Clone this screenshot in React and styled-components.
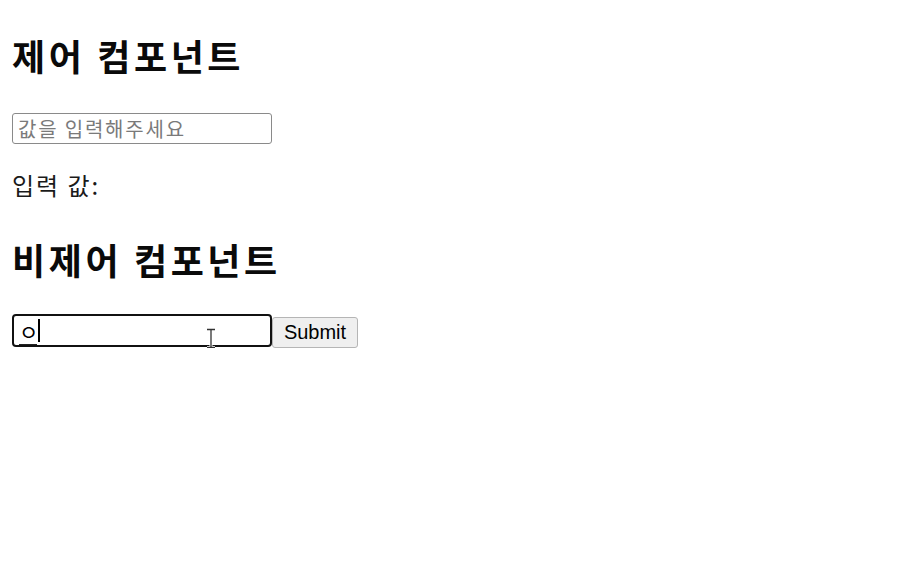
import React from "react";
import styled, { createGlobalStyle } from "styled-components";

const Global = createGlobalStyle`
  html, body { margin: 0; padding: 0; background: #ffffff; }
  body { font-family: "Noto Sans CJK KR", "Noto Sans", sans-serif; color: #000; }
`;

const Page = styled.main`
  padding: 0 12px;
  display: flex;
  flex-direction: column;
  align-items: flex-start;
`;

const Heading = styled.h2`
  margin: ${(p) => p.$top}px 0 0 0;
  font-size: 36px;
  line-height: 44px;
  font-weight: 700;
  letter-spacing: 3.6px;
  color: #0a0a0a;
`;

const TextInput = styled.input`
  box-sizing: border-box;
  margin: 36px 0 0 0;
  width: 260px;
  height: 31px;
  padding: 0 5px;
  border: 1px solid #8a8a8a;
  border-radius: 3px;
  font-family: "Noto Sans CJK KR", sans-serif;
  font-size: 20px;
  line-height: 29px;
  letter-spacing: 1.8px;
  outline: none;
  &::placeholder { color: #7a7a7a; }
`;

const Output = styled.p`
  margin: 26px 0 0 0;
  font-size: 24px;
  line-height: 30px;
  letter-spacing: 2px;
  color: #1a1a1a;
`;

const Form = styled.form`
  position: relative;
  margin-top: 33px;
  display: flex;
  align-items: flex-start;
`;

const Field = styled.div`
  box-sizing: border-box;
  width: 260px;
  height: 33px;
  padding: 0 0 0 5px;
  border: 2px solid #111;
  border-radius: 4px;
  display: flex;
  align-items: center;
  cursor: text;
`;

const Composing = styled.span`
  display: inline-block;
  width: 18px;
  text-align: center;
  font-size: 21px;
  line-height: 26px;
  border-bottom: 1px solid #222;
  margin-top: 2px;
`;

const Caret = styled.span`
  display: inline-block;
  width: 1.5px;
  height: 23px;
  margin-left: 1px;
  background: #000;
`;

const Button = styled.button`
  box-sizing: border-box;
  margin-top: 3px;
  width: 86px;
  height: 31px;
  padding: 0;
  background: #efefef;
  border: 1px solid #b5b5b5;
  border-radius: 3px;
  font-family: "Liberation Sans", Arial, sans-serif;
  font-size: 20px;
  color: #000;
`;

const MouseCursor = styled.svg`
  position: absolute;
  left: 193px;
  top: 14px;
  pointer-events: none;
`;

export default function App() {
  return (
    <>
      <Global />
      <Page>
        <Heading $top={33}>제어 컴포넌트</Heading>
        <TextInput placeholder="값을 입력해주세요" />
        <Output>입력 값:</Output>
        <Heading $top={37}>비제어 컴포넌트</Heading>
        <Form onSubmit={(e) => e.preventDefault()}>
          <Field role="textbox">
            <Composing>ㅇ</Composing>
            <Caret />
          </Field>
          <Button type="submit">Submit</Button>
          <MouseCursor width="12" height="21" viewBox="0 0 12 21">
            <path d="M2 1.5h8M6 1.5v18M2 19.5h8" stroke="#fff" strokeWidth="3" fill="none" />
            <path d="M2 1.5h8M6 1.5v18M2 19.5h8" stroke="#333" strokeWidth="1.3" fill="none" />
          </MouseCursor>
        </Form>
      </Page>
    </>
  );
}
